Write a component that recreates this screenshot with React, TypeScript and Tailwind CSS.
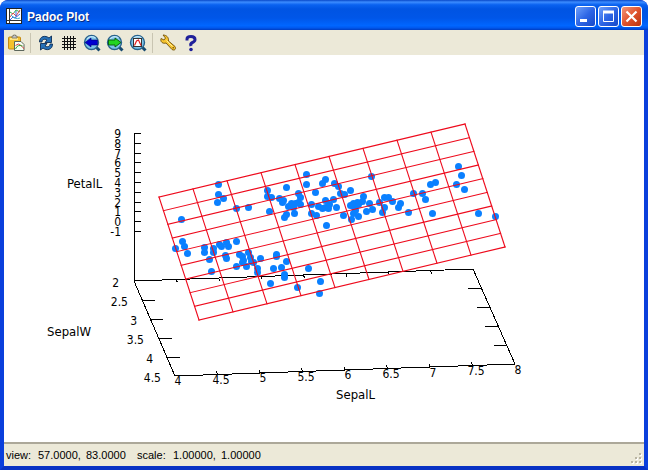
import type { ReactNode } from "react";

type Point = [number, number];

const SAMPLES: Point[] = [
  [218, 184], [218, 194], [223, 198], [217, 202], [181, 219], [236, 208], [248, 207],
  [182, 241], [184, 246], [175, 248], [187, 253], [204, 247], [204, 252], [213, 248],
  [213, 252], [219, 244], [221, 246], [226, 242], [228, 246], [236, 241], [209, 259],
  [211, 271], [225, 255], [226, 258], [239, 254], [242, 256], [243, 260], [242, 262],
  [236, 266], [246, 266], [248, 252], [250, 257], [251, 261], [257, 268], [257, 272],
  [260, 258], [253, 262], [276, 254], [276, 256], [273, 268], [281, 267], [286, 261],
  [284, 274], [284, 277], [270, 283], [308, 268], [320, 281], [297, 287], [319, 293],
  [306, 174], [306, 184], [286, 187], [325, 179], [322, 183], [334, 183], [338, 186],
  [350, 190], [340, 193], [344, 194], [315, 192], [267, 190], [267, 196], [271, 197],
  [279, 198], [282, 202], [283, 200], [298, 193], [300, 197], [298, 202], [300, 204],
  [291, 203], [295, 203], [288, 206], [293, 207], [294, 213], [269, 211], [284, 217],
  [286, 214], [311, 204], [311, 213], [316, 215], [326, 225], [318, 206], [322, 208],
  [325, 200], [333, 199], [325, 207], [329, 204], [328, 208], [336, 207], [371, 176],
  [343, 215], [351, 219], [350, 205], [354, 207], [353, 203], [357, 202], [363, 196],
  [362, 201], [358, 204], [353, 213], [358, 216], [355, 210], [369, 203], [366, 211],
  [372, 209], [379, 202], [384, 197], [388, 197], [392, 201], [384, 207], [382, 212],
  [400, 203], [398, 207], [458, 166], [461, 175], [456, 184], [464, 189], [435, 182],
  [430, 184], [413, 193], [422, 193], [425, 199], [432, 213], [408, 212], [478, 213],
  [495, 216],
];

const PETAL_TICKS = [9, 8, 7, 6, 5, 4, 3, 2, 1, 0, -1];
const SEPAL_W_LABELS: [string, number, number][] = [
  ["2", 119, 287], ["2.5", 128, 306], ["3", 137, 325],
  ["3.5", 144, 344], ["4", 153, 363], ["4.5", 161, 382],
];
const SEPAL_L_LABELS = ["4", "4.5", "5", "5.5", "6", "6.5", "7", "7.5", "8"];
const STEPS = [0, 1, 2, 3, 4, 5, 6, 7, 8, 9];

function lerp(a: Point, b: Point, t: number): Point {
  return [a[0] + (b[0] - a[0]) * t, a[1] + (b[1] - a[1]) * t];
}

function Line({ from, to }: { from: Point; to: Point }) {
  return <line x1={from[0]} y1={from[1]} x2={to[0]} y2={to[1]} />;
}

function Plot() {
  // corners of the fitted plane
  const tl: Point = [159, 197];
  const tr: Point = [465, 124];
  const br: Point = [505, 247];
  const bl: Point = [199, 320];
  // corners of the floor
  const backLeft: Point = [134, 281];
  const backRight: Point = [473, 269];
  const frontRight: Point = [515, 364];
  const frontLeft: Point = [175, 376];

  return (
    <svg
      viewBox="4 55 640 387"
      className="block h-auto w-full bg-white"
      role="img"
      aria-label="3D scatter plot of SepalL, SepalW and PetalL"
    >
      <g stroke="#000" strokeWidth="1" shapeRendering="crispEdges">
        <Line from={[134, 133]} to={backLeft} />
        <Line from={backLeft} to={backRight} />
        <Line from={backRight} to={frontRight} />
        <Line from={frontRight} to={frontLeft} />
        <Line from={frontLeft} to={backLeft} />
        {PETAL_TICKS.map((v, i) => {
          const y = 133 + Math.round(i * 9.8);
          return <Line key={v} from={[134, y]} to={[141, y]} />;
        })}
        {[1, 2, 3, 4].map((i) => {
          const l = lerp(backLeft, frontLeft, i / 5);
          const r = lerp(backRight, frontRight, i / 5);
          return (
            <g key={i}>
              <Line from={l} to={[l[0] + 13, l[1]]} />
              <Line from={[r[0] - 13, r[1]]} to={r} />
            </g>
          );
        })}
        {[1, 2, 3, 4, 5, 6, 7].map((i) => {
          const b = lerp(backLeft, backRight, i / 8);
          const f = lerp(frontLeft, frontRight, i / 8);
          return (
            <g key={i}>
              <Line from={b} to={[b[0] + 1, b[1] + 3]} />
              <Line from={f} to={[f[0] - 1, f[1] - 3]} />
            </g>
          );
        })}
      </g>

      <g fill="#0a80ff">
        {SAMPLES.map(([x, y], i) => (
          <circle key={i} cx={x + 0.5} cy={y + 0.5} r="3.5" />
        ))}
      </g>

      <g stroke="#ee0a1c" strokeWidth="1.1" strokeLinecap="square">
        {STEPS.map((i) => (
          <g key={i}>
            <Line from={lerp(tl, tr, i / 9)} to={lerp(bl, br, i / 9)} />
            <Line from={lerp(tl, bl, i / 9)} to={lerp(tr, br, i / 9)} />
          </g>
        ))}
      </g>

      <g
        fill="#000"
        fontFamily="'DejaVu Sans Condensed', 'DejaVu Sans', sans-serif"
        fontSize="12"
      >
        {PETAL_TICKS.map((v, i) => (
          <text key={v} x="121" y={138 + Math.round(i * 9.8)} textAnchor="end">{v}</text>
        ))}
        {SEPAL_W_LABELS.map(([label, x, y]) => (
          <text key={label} x={x} y={y} textAnchor="end">{label}</text>
        ))}
        {SEPAL_L_LABELS.map((label, i) => (
          <text key={label} x={178 + Math.round(i * 42.5)} y={385 - Math.round(i * 1.4)} textAnchor="middle">
            {label}
          </text>
        ))}
        <g fontSize="13">
          <text x="67" y="188">PetalL</text>
          <text x="47" y="336">SepalW</text>
          <text x="336" y="399">SepalL</text>
        </g>
      </g>
    </svg>
  );
}

function ToolButton({ label, children }: { label: string; children: ReactNode }) {
  return (
    <button type="button" aria-label={label} title={label} className="flex h-6 w-[23px] items-center justify-center">
      <svg viewBox="0 0 18 18" className="h-[18px] w-[18px]" fill="none">{children}</svg>
    </button>
  );
}

function Separator() {
  return <span className="mx-[3px] h-5 w-px bg-[#c9c5b2]" />;
}

function Lens() {
  return (
    <>
      <path d="M13 13l3.500 3.500" stroke="#174a70" strokeWidth="3" />
      <circle cx="8.500" cy="8.500" r="7" fill="#7cc4ea" stroke="#28628c" strokeWidth="1.400" />
      <path d="M4 5a6 6 0 0 1 8.500-1" stroke="#bfe6fa" strokeWidth="1.200" />
    </>
  );
}

function Toolbar() {
  return (
    <div role="toolbar" className="flex h-[25px] items-center bg-[#ece9d8] pt-px">
      <ToolButton label="Copy to clipboard">
        <rect x="1.5" y="3" width="12" height="12" rx="1" fill="#f5c12b" stroke="#c58a12" />
        <path d="M3 5h8" stroke="#ffe687" strokeWidth="2" />
        <path d="M5 4V2h1.500V1h2v1H10v2z" fill="#c9c9c9" stroke="#74705e" strokeWidth=".8" />
        <path d="M7.500 7.500h6.500l3 3v6H7.500z" fill="#f4fff4" stroke="#5c665c" />
        <path d="M8.500 11.500q3-3 5.500 0t3 3" stroke="#e04040" />
        <path d="M8.500 15q2-5 7-3" stroke="#38a038" />
      </ToolButton>
      <Separator />
      <ToolButton label="Replot">
        <path d="M2.500 8c0-6 6-7 9.500-4l2.500-2v6.500H8l2-2.500C7.500 4.500 5 5.500 5 8z" fill="#2671b8" stroke="#0d2d55" strokeWidth=".9" />
        <path d="M15.500 10c0 6-6 7-9.500 4l-2.500 2V9.500H10L8 12c2.500 1.500 5 .5 5-2z" fill="#2671b8" stroke="#0d2d55" strokeWidth=".9" />
      </ToolButton>
      <ToolButton label="Toggle grid">
        <path
          d="M4.500 2v14M7.500 2v14M10.500 2v14M13.500 2v14M2 4.500h14M2 7.500h14M2 10.500h14M2 13.500h14"
          stroke="#111"
          shapeRendering="crispEdges"
        />
      </ToolButton>
      <ToolButton label="Previous zoom">
        <Lens />
        <path d="M2 8.500l6-4.500v2h6.500v5H8v2z" fill="#0000d0" stroke="#000070" strokeWidth=".6" />
      </ToolButton>
      <ToolButton label="Next zoom">
        <Lens />
        <path d="M15 8.500L9 4v2H2.500v5H9v2z" fill="#22d522" stroke="#07580b" strokeWidth=".9" />
      </ToolButton>
      <ToolButton label="Autoscale">
        <Lens />
        <rect x="4.500" y="4.500" width="8" height="8" fill="#fff" stroke="#333" />
        <path d="M5.500 11.500L7.500 7l2-1 2.500 5.500" stroke="#e02020" strokeWidth="1.200" />
      </ToolButton>
      <Separator />
      <ToolButton label="Options">
        <path
          d="M4 1l2.500 3L5 6 2 4.500C1 8 4 10 7 9l6 6.500c2.500 1.500 4.500-.5 3-3L9.500 7C10 3.500 7.500 1 4 1z"
          fill="#f7c52f"
          stroke="#70500c"
          strokeWidth=".9"
        />
        <path d="M7.500 6.500l6 6" stroke="#fff0a0" />
        <circle cx="14.200" cy="13.800" r=".8" fill="#70500c" />
      </ToolButton>
      <ToolButton label="Help">
        <path
          d="M5 6.500V5q0-2.500 4-2.500t4 3q0 2-2.500 3T9 12"
          stroke="#20209a"
          strokeWidth="3"
        />
        <circle cx="9" cy="15.500" r="1.800" fill="#20209a" />
      </ToolButton>
    </div>
  );
}

function WindowButton({ label, close, children }: { label: string; close?: boolean; children: ReactNode }) {
  return (
    <button
      type="button"
      aria-label={label}
      className={`h-[21px] w-[21px] rounded-[3px] border border-white bg-linear-to-br ${
        close ? "from-[#f09478] via-[#e0522c] to-[#b93410]" : "from-[#6f9ffa] via-[#2e66e6] to-[#1748c8]"
      }`}
    >
      <svg viewBox="0 0 19 19" className="block h-full w-full" fill="none" stroke="#fff">{children}</svg>
    </button>
  );
}

function TitleBar() {
  return (
    <header className="flex h-[30px] items-center rounded-t-lg bg-[linear-gradient(to_bottom,#0848c8_0%,#3c8cff_7%,#0a62f0_16%,#0054e3_30%,#0056e8_60%,#0066ff_85%,#0058ee_93%,#003cc0_100%)] pr-[6px] pl-[6px]">
      <svg viewBox="0 0 16 16" className="mt-[2px] h-4 w-4" fill="none">
        <rect x=".5" y=".5" width="15" height="15" fill="#fff" stroke="#222" />
        <path d="M3.500 1v14M1 12.500h14" stroke="#333" />
        <path d="M4 4l3 2 3-4 4 2" stroke="#30b050" />
        <path d="M4 9l3-4 3 3 4-6" stroke="#e04848" />
        <path d="M4 12l3-3 2 1 5-4M10 3v6" stroke="#3f68e0" />
        <path d="M5 7q4 5 9 3" stroke="#35aacb" />
      </svg>
      <h1 className="mt-[3px] ml-[5px] flex-1 font-['Liberation_Sans',sans-serif] text-[12px] leading-4 font-bold text-white [text-shadow:1px_1px_0_#0a2a80]">
        Padoc Plot
      </h1>
      <div className="mt-[3px] flex gap-[2px]">
        <WindowButton label="Minimize">
          <path d="M4 13.500h7" strokeWidth="3" />
        </WindowButton>
        <WindowButton label="Maximize">
          <path d="M4.500 4v10.500h10V4" />
          <path d="M4 5h11" strokeWidth="3" />
        </WindowButton>
        <WindowButton label="Close" close>
          <path d="M4.500 4.500l10 10M14.500 4.500l-10 10" strokeWidth="2.200" />
        </WindowButton>
      </div>
    </header>
  );
}

function StatusBar() {
  return (
    <footer className="flex h-6 items-center border-t-2 border-[#aca899] bg-[#ece9d8] pl-[2px] font-['Liberation_Sans',sans-serif] text-[11px] leading-4 text-black">
      <span className="w-8">view:</span>
      <span className="w-12">57.0000,</span>
      <span className="w-[51px]">83.0000</span>
      <span className="w-9">scale:</span>
      <span className="w-12">1.00000,</span>
      <span>1.00000</span>
      <svg viewBox="0 0 12 12" className="mr-px mb-px ml-auto h-3 w-3 self-end" shapeRendering="crispEdges">
        <path d="M9 1h2v2H9zM5 5h2v2H5zM9 5h2v2H9zM1 9h2v2H1zM5 9h2v2H5zM9 9h2v2H9z" fill="#fff" />
        <path d="M8 0h2v2H8zM4 4h2v2H4zM8 4h2v2H8zM0 8h2v2H0zM4 8h2v2H4zM8 8h2v2H8z" fill="#b8b4a2" />
      </svg>
    </footer>
  );
}

export default function App() {
  return (
    <div className="w-full overflow-hidden rounded-t-lg bg-[#0831d9]">
      <TitleBar />
      <div className="border-x-4 border-b-4 border-[#0a3fdc] border-b-[#0832c4] bg-white">
        <Toolbar />
        <main>
          <Plot />
        </main>
        <StatusBar />
      </div>
    </div>
  );
}
